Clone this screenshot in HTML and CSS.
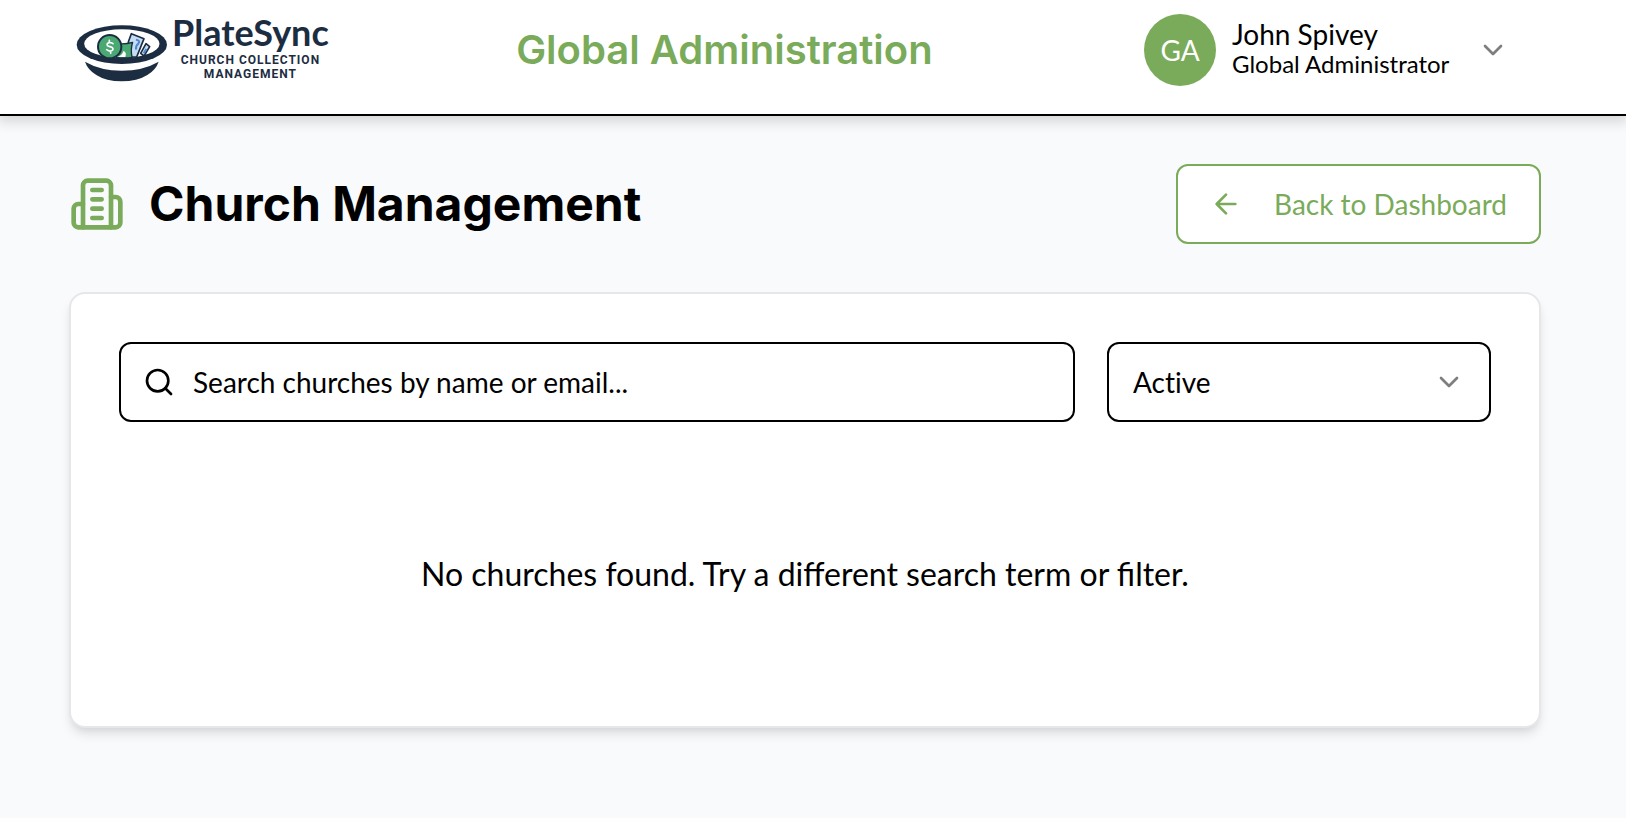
FILE: index.html
```html
<!DOCTYPE html>
<html lang="en">
<head>
  <meta charset="utf-8">
  <meta name="viewport" content="width=device-width, initial-scale=1">
  <title>Church Management - PlateSync</title>
  <link rel="stylesheet" href="styles.css">
</head>
<body>
  <header class="topbar">
    <div class="container topbar-inner">
      <a class="logo" href="#" aria-label="PlateSync home">
        <svg class="logo-mark" viewBox="18 28 276 171" aria-hidden="true">
          <ellipse cx="155.500" cy="87" rx="135.500" ry="58" fill="#1c2d42"/>
          <ellipse cx="155.500" cy="84" rx="113" ry="43" fill="#fff"/>
          <g stroke="#1c2d42" stroke-width="5" stroke-linejoin="round">
            <path d="M212 113 L228 84 L239 93 L222 121 Z" fill="#c4dcf4"/>
            <path d="M176 76 L184 54 L222 69 L200 124 L166 124 Z" fill="#c4dcf4"/>
            <path d="M146 84 Q166 86 188 80 Q181 101 186 125 Q165 129 138 125 Z" fill="#4aa873" stroke-width="4"/>
          </g>
          <path d="M198 72 q14 2 7 12 q-8 5 -7 18 M229 100 l-8 13" fill="none" stroke="#4f87d0" stroke-width="6"/>
          <path d="M160 106 q11 3 6 18 h-24 q15-4 18-18" fill="#fff"/>
          <circle cx="119" cy="93" r="35" fill="#4aa873" stroke="#1c2d42" stroke-width="6"/>
          <path d="M129 84 Q119 77 112 84 Q109 91 120 93 Q132 96 128 103 Q121 110 110 102 M118 74 V81 M122 106 V113" fill="none" stroke="#fff" stroke-width="5" stroke-linecap="round"/>
          <path d="M45 138 Q92 165 155 165 Q219 165 266 138 Q258 162 232 178 Q202 197 155 197 Q108 197 79 178 Q53 162 45 138 Z" fill="#1c2d42"/>
        </svg>
        <span class="logo-text">
          <span class="logo-name">PlateSync</span>
          <span class="logo-tagline">CHURCH COLLECTION<br>MANAGEMENT</span>
        </span>
      </a>
      <p class="topbar-title">Global Administration</p>
      <button class="user-menu" type="button" aria-haspopup="menu">
        <span class="avatar">GA</span>
        <span class="user-text">
          <span class="user-name">John Spivey</span>
          <span class="user-role">Global Administrator</span>
        </span>
        <svg class="icon chevron" viewBox="0 0 24 24" aria-hidden="true"><path d="m6 9 6 6 6-6"/></svg>
      </button>
    </div>
  </header>

  <main class="container content">
    <div class="page-head">
      <h1 class="page-title">
        <svg class="icon icon-building" viewBox="0 0 24 24" aria-hidden="true">
          <path d="M6 22V4a2 2 0 0 1 2-2h8a2 2 0 0 1 2 2v18Z"/>
          <path d="M6 12H4a2 2 0 0 0-2 2v6a2 2 0 0 0 2 2h2"/>
          <path d="M18 9h2a2 2 0 0 1 2 2v9a2 2 0 0 1-2 2h-2"/>
          <path d="M10 6h4M10 10h4M10 14h4M10 18h4"/>
        </svg>
        Church Management
      </h1>
      <button class="back-button" type="button">
        <svg class="icon" viewBox="0 0 24 24" aria-hidden="true"><path d="m12 19-7-7 7-7M19 12H5"/></svg>
        Back to Dashboard
      </button>
    </div>

    <section class="card">
      <div class="filters">
        <div class="search">
          <svg class="icon search-icon" viewBox="0 0 24 24" aria-hidden="true"><circle cx="11" cy="11" r="8"/><path d="m21 21-4.300-4.300"/></svg>
          <input class="field search-input" type="search" placeholder="Search churches by name or email..." aria-label="Search churches">
        </div>
        <div class="status">
          <select class="field status-select" aria-label="Status">
            <option>Active</option>
            <option>Inactive</option>
            <option>All</option>
          </select>
          <svg class="icon chevron status-chevron" viewBox="0 0 24 24" aria-hidden="true"><path d="m6 9 6 6 6-6"/></svg>
        </div>
      </div>
      <p class="empty">No churches found. Try a different search term or filter.</p>
    </section>
  </main>
</body>
</html>
```
FILE: styles.css
```css
:root {
  --green: #7aab5a;
  --navy: #1c2d42;
  --page: #f9fafc;
  --line: #e5e7eb;
  --gutter: 16px;
}

*,
*::before,
*::after {
  box-sizing: border-box;
}

body {
  min-height: 100vh;
  margin: 0;
  background: var(--page);
  color: #000;
  font-family: Lato, "Open Sans", sans-serif;
  font-size: 28px;
  line-height: 40px;
}

button,
input,
select {
  font: inherit;
  color: inherit;
}

.topbar {
  padding: 10px var(--gutter) 24px 0;
  background: #fff;
  border-bottom: 2px solid #000;
  box-shadow: 0 4px 12px 2px rgba(0, 0, 0, 0.14);
}

.container {
  width: 100%;
  max-width: 1536px;
  margin: 0 auto;
  padding: 0 32px;
}

.topbar-inner {
  display: flex;
  align-items: center;
  justify-content: space-between;
}

.logo {
  display: flex;
  align-items: center;
  gap: 4px;
  height: 80px;
  padding: 0 8px 0 7px;
  color: var(--navy);
  text-decoration: none;
}

.logo-mark {
  width: 92px;
  height: 57px;
  margin-top: 6px;
}

.logo-text {
  display: flex;
  flex-direction: column;
  align-items: center;
  gap: 3px;
  padding-bottom: 6px;
}

.logo-name {
  font-size: 36px;
  font-weight: 700;
  line-height: 36px;
}

.logo-tagline {
  font-family: Roboto, sans-serif;
  font-size: 12px;
  font-weight: 700;
  line-height: 14px;
  letter-spacing: 1px;
  text-align: center;
}

.topbar-title {
  margin: 0;
  color: var(--green);
  font-family: Inter, sans-serif;
  font-size: 40px;
  font-weight: 600;
  line-height: 48px;
}

.user-menu {
  display: flex;
  align-items: center;
  gap: 16px;
  padding: 0 32px;
  border: 0;
  background: none;
  text-align: left;
}

.avatar {
  display: grid;
  place-items: center;
  width: 72px;
  height: 72px;
  border-radius: 50%;
  background: var(--green);
  color: #fff;
}

.user-text {
  display: flex;
  flex-direction: column;
  min-width: 221px;
  margin-right: 8px;
}

.user-name {
  line-height: 28px;
}

.user-role {
  font-size: 24px;
  line-height: 32px;
}

.icon {
  flex: none;
  width: 32px;
  height: 32px;
  fill: none;
  stroke: currentColor;
  stroke-width: 2;
  stroke-linecap: round;
  stroke-linejoin: round;
}

.chevron {
  opacity: 0.5;
}

main.container {
  width: calc(100% - var(--gutter));
  margin-left: max(0px, calc((100% - var(--gutter) - 1536px) / 2));
  padding-top: 48px;
  padding-bottom: 48px;
}

.page-head {
  display: flex;
  align-items: center;
  justify-content: space-between;
  margin-bottom: 48px;
}

.page-title {
  display: flex;
  align-items: center;
  gap: 24px;
  margin: 0;
  font-family: Inter, sans-serif;
  font-size: 48px;
  font-weight: 700;
  line-height: 56px;
}

.icon-building {
  width: 56px;
  height: 56px;
  color: var(--green);
}

.back-button {
  display: flex;
  align-items: center;
  gap: 32px;
  height: 80px;
  padding: 0 32px;
  border: 2px solid var(--green);
  border-radius: 12px;
  background: #fff;
  color: var(--green);
}

.card {
  padding: 48px;
  border: 2px solid var(--line);
  border-radius: 16px;
  background: #fff;
  box-shadow: 0 8px 12px -2px rgba(0, 0, 0, 0.1), 0 4px 8px -4px rgba(0, 0, 0, 0.1);
}

.filters {
  display: flex;
  gap: 32px;
  margin-bottom: 48px;
}

.search,
.status {
  position: relative;
}

.search {
  flex: 1;
}

.status {
  flex: 0 0 384px;
}

.field {
  display: block;
  width: 100%;
  height: 80px;
  border: 2px solid #000;
  border-radius: 12px;
  background: #fff;
  appearance: none;
}

.search-input {
  padding: 0 24px 0 72px;
}

.search-input::placeholder {
  color: #000;
  opacity: 1;
}

.search-icon {
  position: absolute;
  top: 24px;
  left: 24px;
}

.status-select {
  padding: 0 64px 0 24px;
  font-variant-ligatures: none;
}

.status-chevron {
  position: absolute;
  top: 24px;
  right: 26px;
  pointer-events: none;
}

.empty {
  margin: 0;
  padding: 80px 0;
  font-size: 32px;
  line-height: 48px;
  text-align: center;
}
```
